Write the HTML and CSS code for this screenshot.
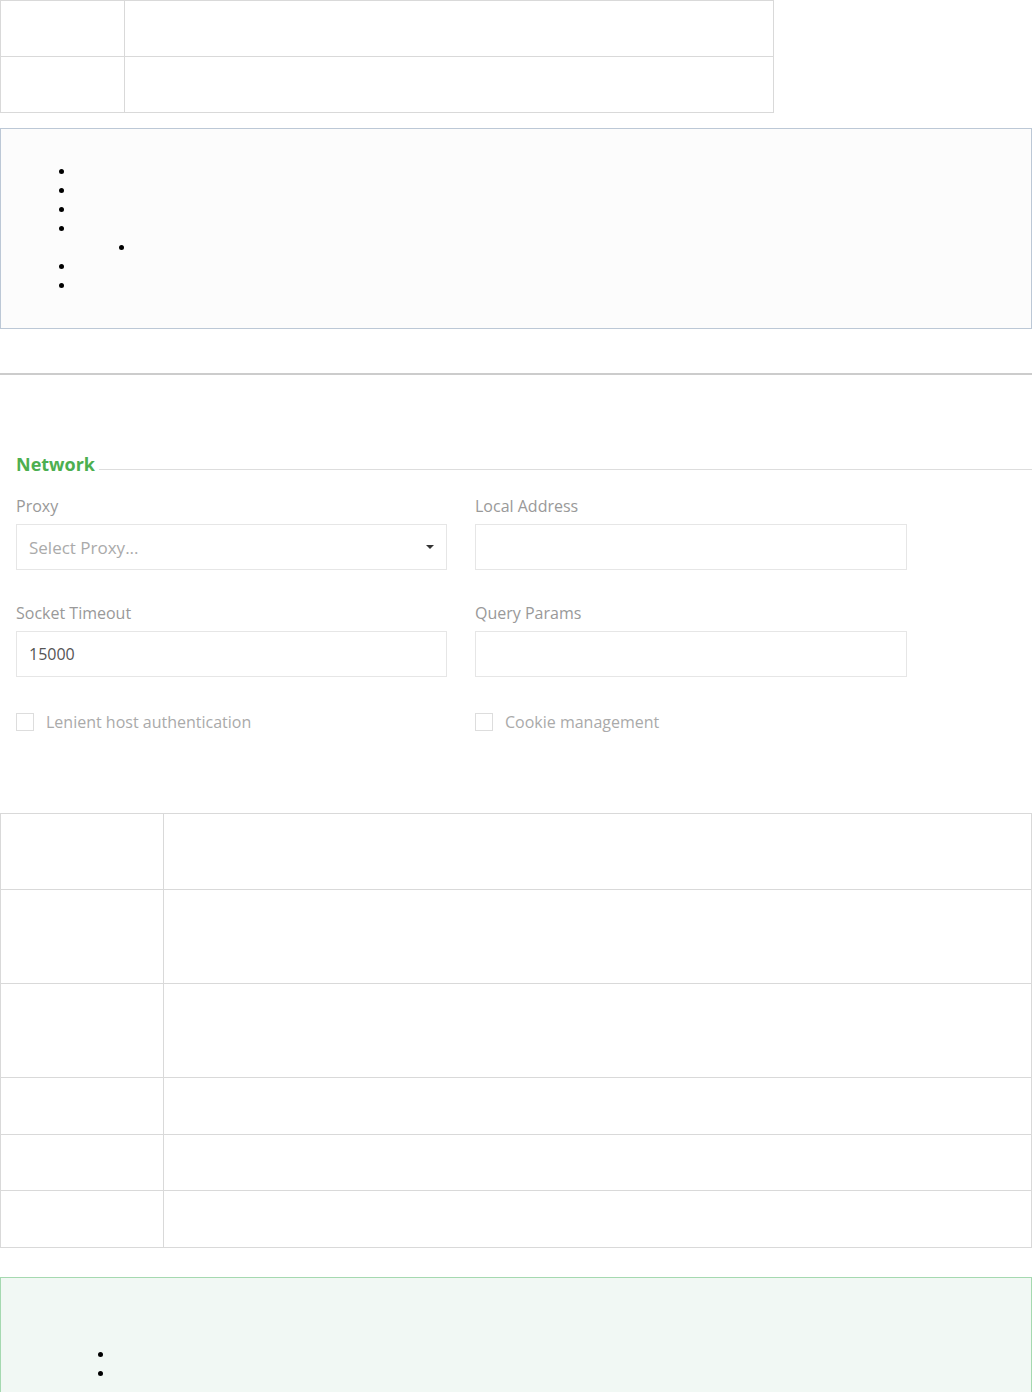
FILE: index.html
```html
<!DOCTYPE html>
<html lang="en">
<head>
    <meta charset="UTF-8">
    <meta name="viewport" content="width=device-width, initial-scale=1.0">
    <title>HTTP Connection Settings</title>
    <link rel="stylesheet" href="styles.css">
</head>
<body>
    <div class="page">

        <table class="doc-table top-table">
            <tr><td class="key"></td><td></td></tr>
            <tr><td class="key"></td><td></td></tr>
        </table>

        <div class="panel info">
            <ul class="bullets">
                <li>&nbsp;</li>
                <li>&nbsp;</li>
                <li>&nbsp;</li>
                <li>&nbsp;
                    <ul class="bullets nested">
                        <li>&nbsp;</li>
                    </ul>
                </li>
                <li>&nbsp;</li>
                <li>&nbsp;</li>
            </ul>
        </div>

        <hr class="rule">

        <div class="network">
            <div class="legend">
                <span class="legend-title">Network</span>
                <span class="legend-line"></span>
            </div>

            <div class="form-grid">
                <div class="field">
                    <label>Proxy</label>
                    <div class="select">
                        <span class="placeholder">Select Proxy...</span>
                        <span class="caret"></span>
                    </div>
                </div>
                <div class="field">
                    <label>Local Address</label>
                    <div class="input"></div>
                </div>
                <div class="field">
                    <label>Socket Timeout</label>
                    <div class="input">15000</div>
                </div>
                <div class="field">
                    <label>Query Params</label>
                    <div class="input"></div>
                </div>
                <div class="check">
                    <span class="box"></span>
                    <span>Lenient host authentication</span>
                </div>
                <div class="check">
                    <span class="box"></span>
                    <span>Cookie management</span>
                </div>
            </div>
        </div>

        <table class="doc-table params-table">
            <tr class="tall"><td class="key"></td><td></td></tr>
            <tr class="taller"><td class="key"></td><td></td></tr>
            <tr class="taller"><td class="key"></td><td></td></tr>
            <tr class="short"><td class="key"></td><td></td></tr>
            <tr><td class="key"></td><td></td></tr>
            <tr class="short"><td class="key"></td><td></td></tr>
        </table>

        <div class="panel tip">
            <ul class="bullets">
                <li>&nbsp;</li>
                <li>&nbsp;</li>
            </ul>
        </div>

    </div>
</body>
</html>
```

FILE: styles.css
```css
* {
    margin: 0;
    padding: 0;
    box-sizing: border-box;
}
body {
    font-family: 'Open Sans', 'Liberation Sans', sans-serif;
    background: #fff;
    color: #333;
}
.page {
    width: 1032px;
}

/* tables */
.doc-table {
    border-collapse: collapse;
}
.doc-table td {
    border: 1px solid #d9d9d9;
    height: 56px;
}
.top-table {
    width: 774px;
}
.top-table .key {
    width: 124px;
}
.params-table {
    width: 1032px;
    margin-top: 80px;
}
.params-table .key {
    width: 163px;
}
.params-table .tall td {
    height: 76px;
}
.params-table .taller td {
    height: 94px;
}
.params-table .short td {
    height: 57px;
}

/* note boxes */
.panel {
    border: 1px solid #bcc8d6;
    background: #fcfcfc;
}
.info {
    margin-top: 15px;
    height: 201px;
    padding-top: 33px;
}
.tip {
    margin-top: 29px;
    border-color: #a5d9b0;
    background: #f1f8f4;
    height: 130px;
    padding-top: 67px;
}
.bullets {
    list-style: disc;
    font-size: 13px;
    line-height: 19px;
    color: #000;
    padding-left: 74px;
}
.bullets.nested {
    padding-left: 60px;
}
.tip .bullets {
    padding-left: 113px;
}

.rule {
    border: none;
    border-top: 2px solid #ccc;
    margin-top: 44px;
}

/* network form */
.network {
    padding: 0 0 0 16px;
    margin-top: 78px;
}
.legend {
    display: flex;
    align-items: flex-end;
    gap: 4px;
}
.legend-title {
    color: #4caf50;
    font-weight: bold;
    font-size: 18px;
    line-height: 22px;
}
.legend-line {
    flex: 1;
    border-bottom: 1px solid #ddd;
    margin-bottom: 5px;
}
.form-grid {
    display: grid;
    grid-template-columns: 431px 432px;
    column-gap: 28px;
    row-gap: 33px;
    margin-top: 21px;
}
.field label {
    display: block;
    font-size: 16px;
    line-height: 20px;
    color: #999;
    margin-bottom: 8px;
}
.input, .select {
    height: 46px;
    border: 1px solid #e6e6e6;
    padding: 0 12px;
    display: flex;
    align-items: center;
    font-size: 16px;
    color: #555;
}
.select {
    justify-content: space-between;
}
.placeholder {
    font-size: 17px;
    color: #aaa;
}
.caret {
    width: 0;
    height: 0;
    border-left: 4px solid transparent;
    border-right: 4px solid transparent;
    border-top: 4px solid #333;
}
.check {
    display: flex;
    align-items: center;
    gap: 12px;
    font-size: 16px;
    color: #aaa;
    margin-top: 1px;
}
.check .box {
    width: 18px;
    height: 18px;
    border: 1px solid #ddd;
    background: #fff;
}
```
